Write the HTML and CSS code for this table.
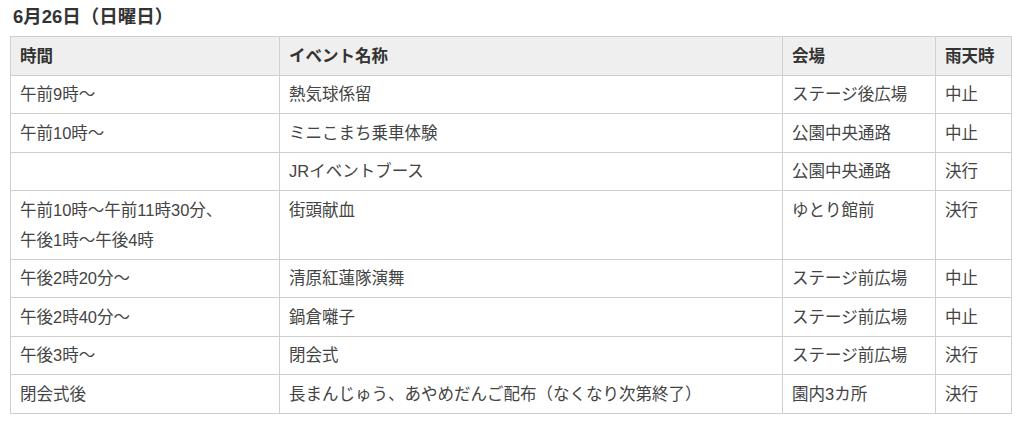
FILE: index.html
```html
<!DOCTYPE html>
<html lang="ja">
<head>
<meta charset="utf-8">
<link rel="stylesheet" href="styles.css">
</head>
<body>
<h2 class="day-title">6月26日（日曜日）</h2>
<table class="schedule">
  <colgroup>
    <col class="c-time">
    <col class="c-event">
    <col class="c-place">
    <col class="c-rain">
  </colgroup>
  <thead>
    <tr><th>時間</th><th>イベント名称</th><th>会場</th><th>雨天時</th></tr>
  </thead>
  <tbody>
    <tr><td>午前9時〜</td><td>熱気球係留</td><td>ステージ後広場</td><td>中止</td></tr>
    <tr><td>午前10時〜</td><td>ミニこまち乗車体験</td><td>公園中央通路</td><td>中止</td></tr>
    <tr><td></td><td>JRイベントブース</td><td>公園中央通路</td><td>決行</td></tr>
    <tr><td>午前10時〜午前11時30分、<br>午後1時〜午後4時</td><td>街頭献血</td><td>ゆとり館前</td><td>決行</td></tr>
    <tr><td>午後2時20分〜</td><td>清原紅蓮隊演舞</td><td>ステージ前広場</td><td>中止</td></tr>
    <tr><td>午後2時40分〜</td><td>鍋倉囃子</td><td>ステージ前広場</td><td>中止</td></tr>
    <tr><td>午後3時〜</td><td>閉会式</td><td>ステージ前広場</td><td>決行</td></tr>
    <tr><td>閉会式後</td><td>長まんじゅう、あやめだんご配布（なくなり次第終了）</td><td>園内3カ所</td><td>決行</td></tr>
  </tbody>
</table>
</body>
</html>
```

FILE: styles.css
```css
html, body {
  margin: 0;
  padding: 0;
  background: #ffffff;
}
body {
  padding: 0 10px;
  font-family: "Liberation Sans", "Noto Sans CJK JP", sans-serif;
  color: #333333;
}
.day-title {
  margin: 0;
  padding: 3px 0 0 3px;
  height: 31px;
  box-sizing: border-box;
  font-size: 18.5px;
  line-height: 27px;
  font-weight: bold;
  color: #333333;
}
.schedule {
  margin-top: 5px;
  width: 1001px;
  border-collapse: collapse;
  table-layout: fixed;
  font-size: 16.5px;
  line-height: 30px;
}
.c-time { width: 269px; }
.c-event { width: 503px; }
.c-place { width: 153px; }
.c-rain { width: 76px; }
.schedule th,
.schedule td {
  border: 1px solid #cfcfcf;
  padding: 3.75px 9px;
  text-align: left;
  vertical-align: top;
  color: #444444;
}
.schedule th {
  background: #efefef;
  font-weight: bold;
  color: #333333;
}
```
